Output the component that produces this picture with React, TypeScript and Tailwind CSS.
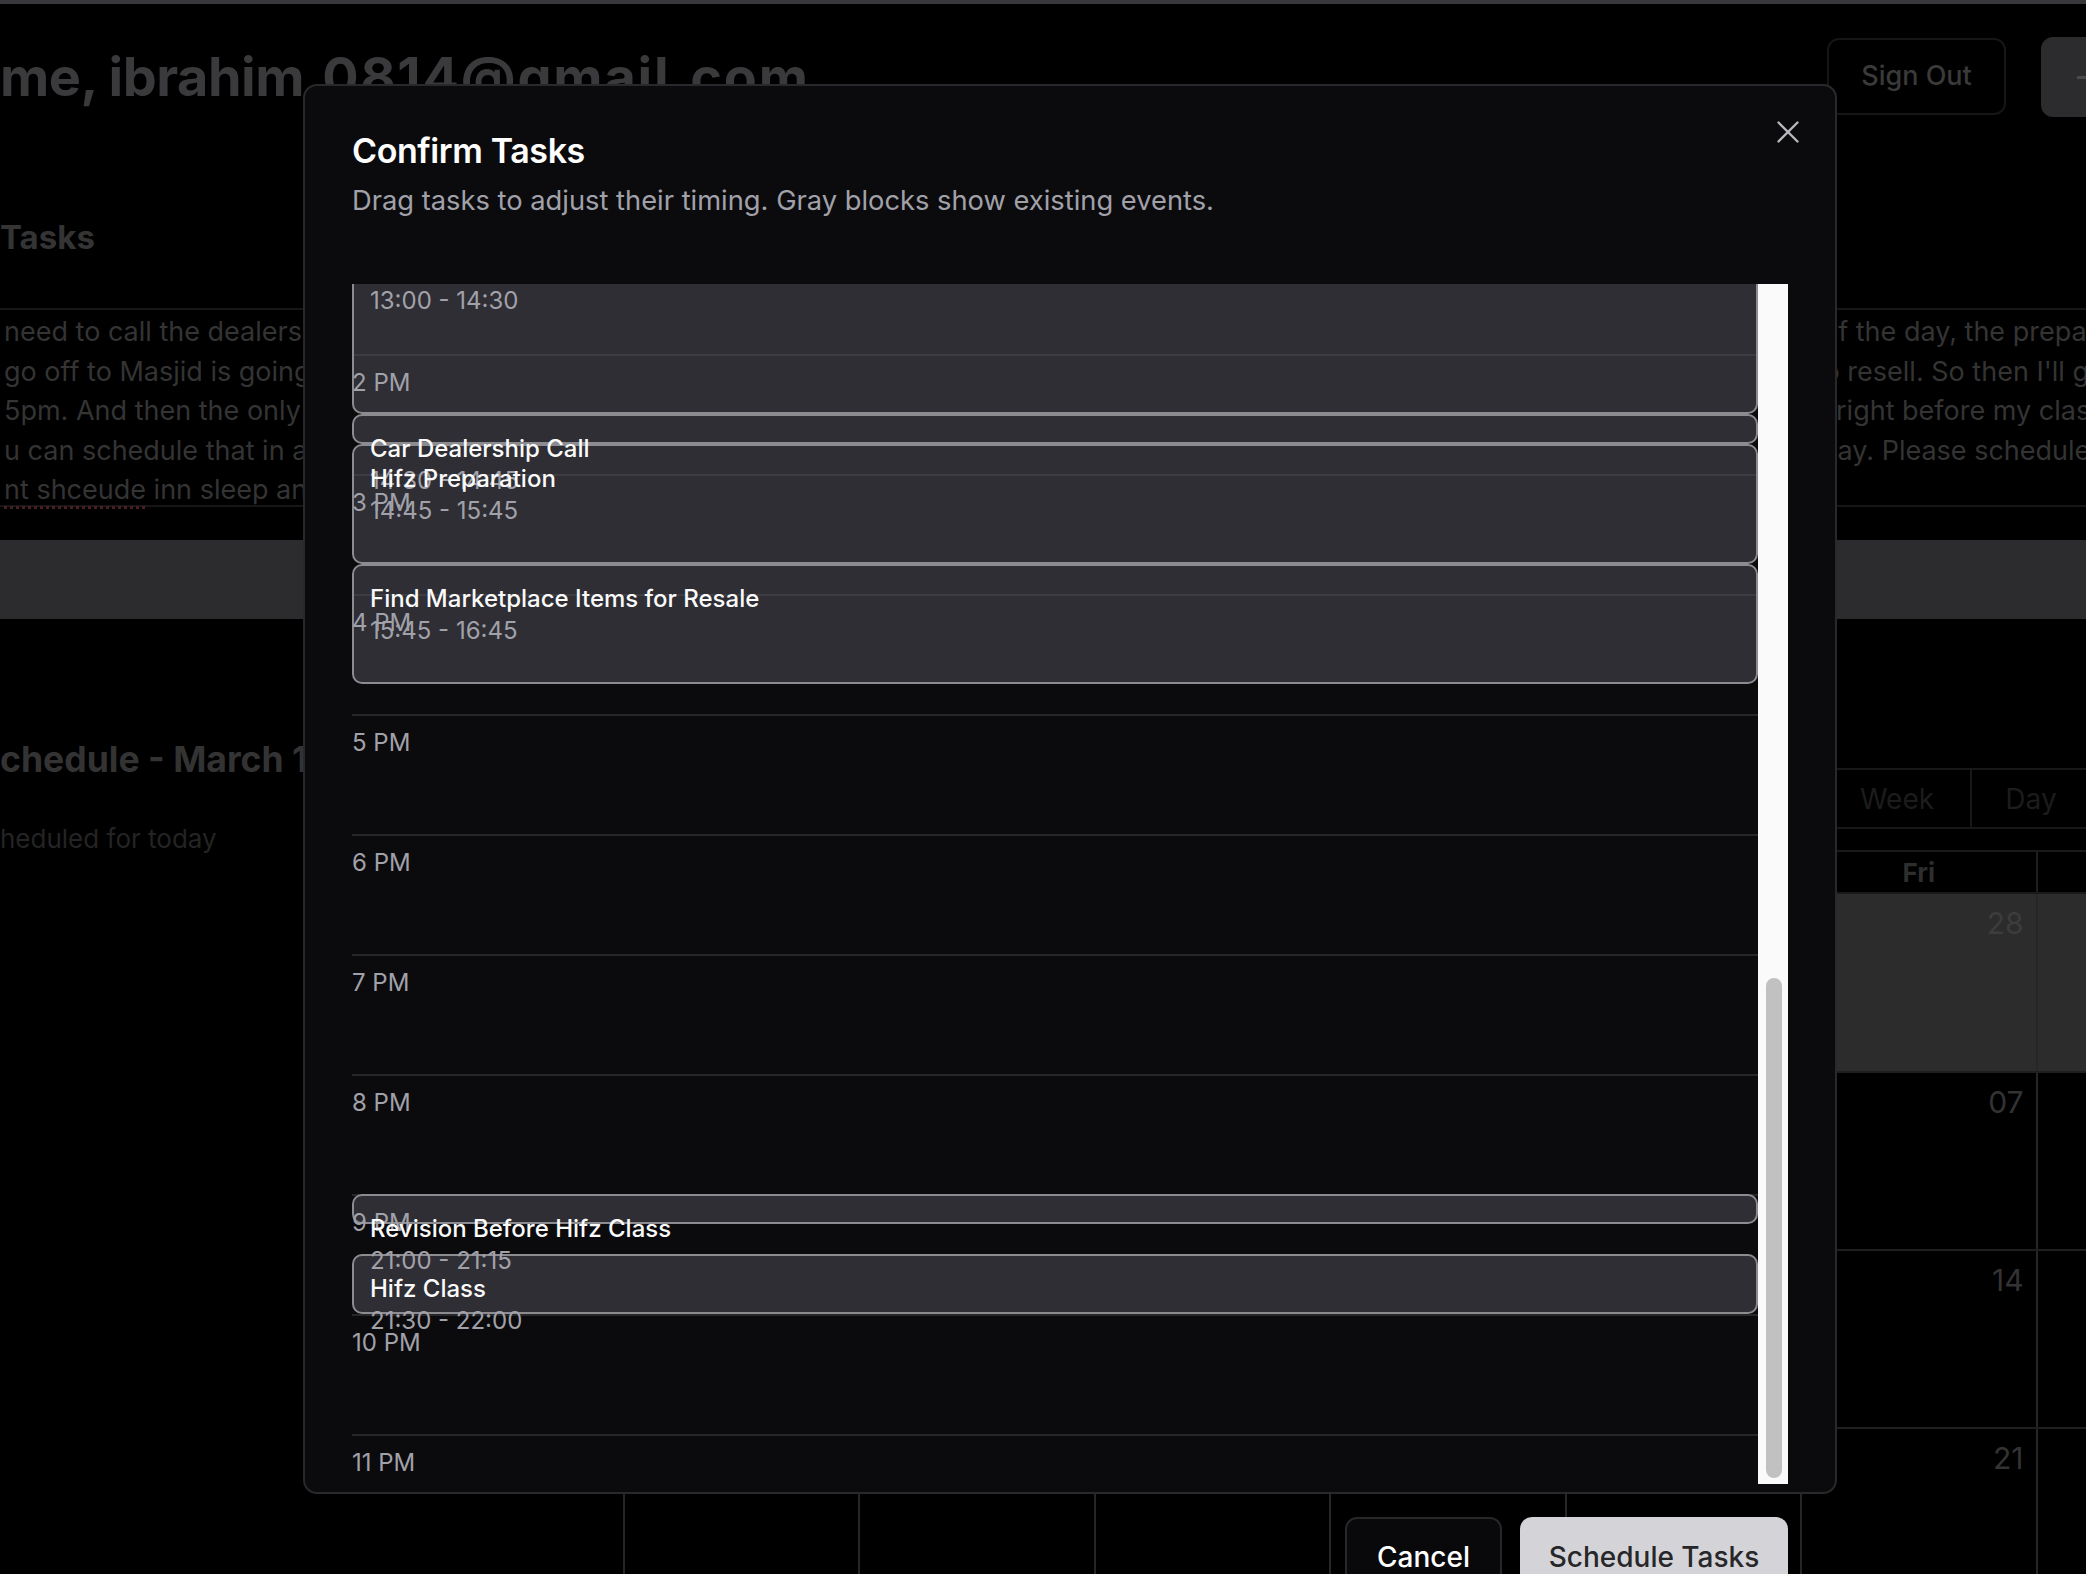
import React from "react";
import { X } from "lucide-react";

type Ev = { title: string; start: number; end: number; label: string };

const SCROLL = 1610;
const HOUR = 120;

const events: Ev[] = [
  { title: "Team Sync", start: 13 * 60, end: 14 * 60 + 30, label: "13:00 - 14:30" },
  { title: "Car Dealership Call", start: 14 * 60 + 30, end: 14 * 60 + 45, label: "14:30 - 14:45" },
  { title: "Hifz Preparation", start: 14 * 60 + 45, end: 15 * 60 + 45, label: "14:45 - 15:45" },
  { title: "Find Marketplace Items for Resale", start: 15 * 60 + 45, end: 16 * 60 + 45, label: "15:45 - 16:45" },
  { title: "Revision Before Hifz Class", start: 21 * 60, end: 21 * 60 + 15, label: "21:00 - 21:15" },
  { title: "Hifz Class", start: 21 * 60 + 30, end: 22 * 60, label: "21:30 - 22:00" },
];

const hourLabel = (h: number) => {
  const s = h < 12 ? "AM" : "PM";
  const n = h % 12 === 0 ? 12 : h % 12;
  return `${n} ${s}`;
};

const textLines: { left: React.ReactNode; right: string; rightX: number }[] = [
  { left: "need to call the dealership today about the car", right: "of the day, the preparation", rightX: 1822 },
  { left: "go off to Masjid is going to take me an hour", right: "to resell. So then I'll go", rightX: 1815 },
  { left: "5pm. And then the only thing left is revision", right: "right before my class", rightX: 1836 },
  { left: "u can schedule that in around the rest of the", right: "day. Please schedule", rightX: 1821 },
  {
    left: (
      <>
        <span className="underline decoration-dotted decoration-[#4a1f22] decoration-[3px] underline-offset-[7px]">nt shceude</span>
        {" inn sleep and meals"}
      </>
    ),
    right: "",
    rightX: 2086,
  },
];

const days = ["Sun", "Mon", "Tue", "Wed", "Thu", "Fri", "Sat"];
const weeks = [
  ["23", "24", "25", "26", "27", "28", "01"],
  ["02", "03", "04", "05", "06", "07", "08"],
  ["09", "10", "11", "12", "13", "14", "15"],
  ["16", "17", "18", "19", "20", "21", "22"],
];

export default function App() {
  return (
    <div className="relative w-[2086px] h-[1574px] overflow-hidden bg-black font-['Inter',sans-serif]">
      {/* Background page */}
      <div className="h-[4px] bg-[#38383a]" />
      <div className="flex h-[110px] items-start">
        <div className="w-[1827px] shrink-0 whitespace-nowrap pt-[41px] text-[54px] font-bold leading-[64px] tracking-[-0.5px] text-[#3a3a3c]">
          me, ibrahim<span className="tracking-[1.8px]">.0814@gmail.com</span>
        </div>
        <div className="mt-[34px] flex h-[77px] w-[179px] shrink-0 items-center justify-center rounded-[12px] border-2 border-[#161616] text-[27px] font-medium text-[#3a3a3a]">
          Sign Out
        </div>
        <div className="ml-[35px] mt-[33px] flex h-[80px] w-[200px] shrink-0 items-center rounded-[12px] bg-[#2c2c2e] pl-[36px]">
          <div className="h-[3px] w-[14px] bg-[#4a4a4c]" />
        </div>
      </div>
      <div className="h-[194px] pt-[101px] text-[33px] font-bold leading-[44px] text-[#343434]">Tasks</div>
      <div className="h-[199px] border-y-2 border-[#161616] pt-[2px] text-[27px] leading-[39.5px] text-[#343434]">
        {textLines.map((l, i) => (
          <div key={i} className="relative h-[39.5px] whitespace-nowrap">
            <div className="absolute left-[4px] top-0">{l.left}</div>
            {l.right && (
              <div className="absolute top-0" style={{ left: l.rightX }}>
                {l.right}
              </div>
            )}
          </div>
        ))}
      </div>
      <div className="mt-[33px] h-[79px] bg-[#2c2c2e]" />
      <div className="flex">
        <div className="w-[623px] shrink-0 pt-[119px]">
          <div className="whitespace-nowrap text-[35.6px] font-bold leading-[44px] text-[#333333]">
            chedule - March 1<span className="ml-[10px]">4, 2025</span>
          </div>
          <div className="mt-[37px] whitespace-nowrap text-[26px] leading-[40px] text-[#242424]">heduled for today</div>
        </div>
        <div className="w-[1648px] shrink-0 pt-[146px]">
          <div className="ml-[1199px] flex h-[64px] pt-[3px] text-[28px] text-[#1c1c1c]">
            <div className="flex w-[150px] items-center justify-center border-2 border-[#181818]">Week</div>
            <div className="flex w-[120px] items-center justify-center border-y-2 border-r-2 border-[#181818]">Day</div>
          </div>
          <div className="mt-[21px] grid h-[44px] grid-cols-7 border-y-2 border-[#1a1a1a]">
            {days.map((d) => (
              <div key={d} className="flex items-center justify-center border-l-2 border-[#1f1f1f] text-[26px] font-bold text-[#2e2e2e]">
                {d}
              </div>
            ))}
          </div>
          {weeks.map((w, wi) => (
            <div
              key={wi}
              className={`grid grid-cols-7 border-b-2 border-[#1f1f1f] ${wi === 0 ? "h-[179px] bg-[#2c2c2c]" : "h-[178px]"}`}
            >
              {w.map((d, di) => (
                <div
                  key={di}
                  className={`border-l-2 pr-[12px] pt-[12px] text-right text-[30px] leading-[34px] ${
                    wi === 0 ? "border-[#262626] text-[#3c3c3c]" : "border-[#262626] text-[#333333]"
                  }`}
                >
                  {d}
                </div>
              ))}
            </div>
          ))}
        </div>
      </div>

      {/* Modal */}
      <div className="absolute left-[303px] top-[84px] z-10 h-[1410px] w-[1534px] rounded-[14px] border-2 border-[#29292c] bg-[#0b0b0d] px-[47px] pt-[48px]">
        <button className="absolute right-[28px] top-[27px] text-[#b9b9bd]">
          <X size={38} strokeWidth={1.5} />
        </button>
        <div className="text-[34px] font-semibold leading-[34px] tracking-[-0.4px] text-white">Confirm Tasks</div>
        <div className="mt-[13px] text-[27.3px] leading-[40px] text-[#a1a1aa]">
          Drag tasks to adjust their timing. Gray blocks show existing events.
        </div>
        <div className="mt-[63px] flex h-[1200px]">
          <div className="relative flex-1 overflow-hidden">
            <div className="relative" style={{ marginTop: -SCROLL }}>
              {Array.from({ length: 24 }).map((_, h) => (
                <div key={h} className="h-[120px] border-t-2 border-[#27272a]" />
              ))}
              {events.map((e, i) => (
                <div
                  key={`b${i}`}
                  className="absolute left-0 right-0 rounded-[10px] border-2 border-[#8b8b90] bg-[#52525b]/50"
                  style={{ top: (e.start / 60) * HOUR, height: ((e.end - e.start) / 60) * HOUR }}
                />
              ))}
              <div className="absolute left-0 right-0 top-0">
                {Array.from({ length: 24 }).map((_, h) => (
                  <div key={h} className="h-[120px] pt-[13px] text-[24px] leading-[32px] text-[#a1a1aa]">
                    {hourLabel(h)}
                  </div>
                ))}
              </div>
              {events.map((e, i) => (
                <div
                  key={`t${i}`}
                  className="absolute left-0 right-0 px-[18px] pt-[19px] text-[24px] leading-[32px]"
                  style={{ top: (e.start / 60) * HOUR }}
                >
                  <div className="whitespace-nowrap font-medium text-[#fafafa]">{e.title}</div>
                  <div className="whitespace-nowrap text-[#a1a1aa]">{e.label}</div>
                </div>
              ))}
            </div>
          </div>
          <div className="relative w-[30px] shrink-0 bg-[#fafafa]">
            <div className="absolute left-[8px] top-[694px] h-[500px] w-[16px] rounded-full bg-[#c1c1c1]" />
          </div>
        </div>
        <div className="mt-[33px] flex justify-end gap-[18px]">
          <button className="h-[76px] w-[157px] rounded-[12px] border-2 border-[#27272a] bg-[#09090b] pt-[3px] text-[28px] font-medium text-white">
            Cancel
          </button>
          <button className="h-[76px] w-[268px] rounded-[12px] bg-[#d4d4d8] pt-[3px] text-[28px] font-medium text-[#27272a]">
            Schedule Tasks
          </button>
        </div>
      </div>
    </div>
  );
}
